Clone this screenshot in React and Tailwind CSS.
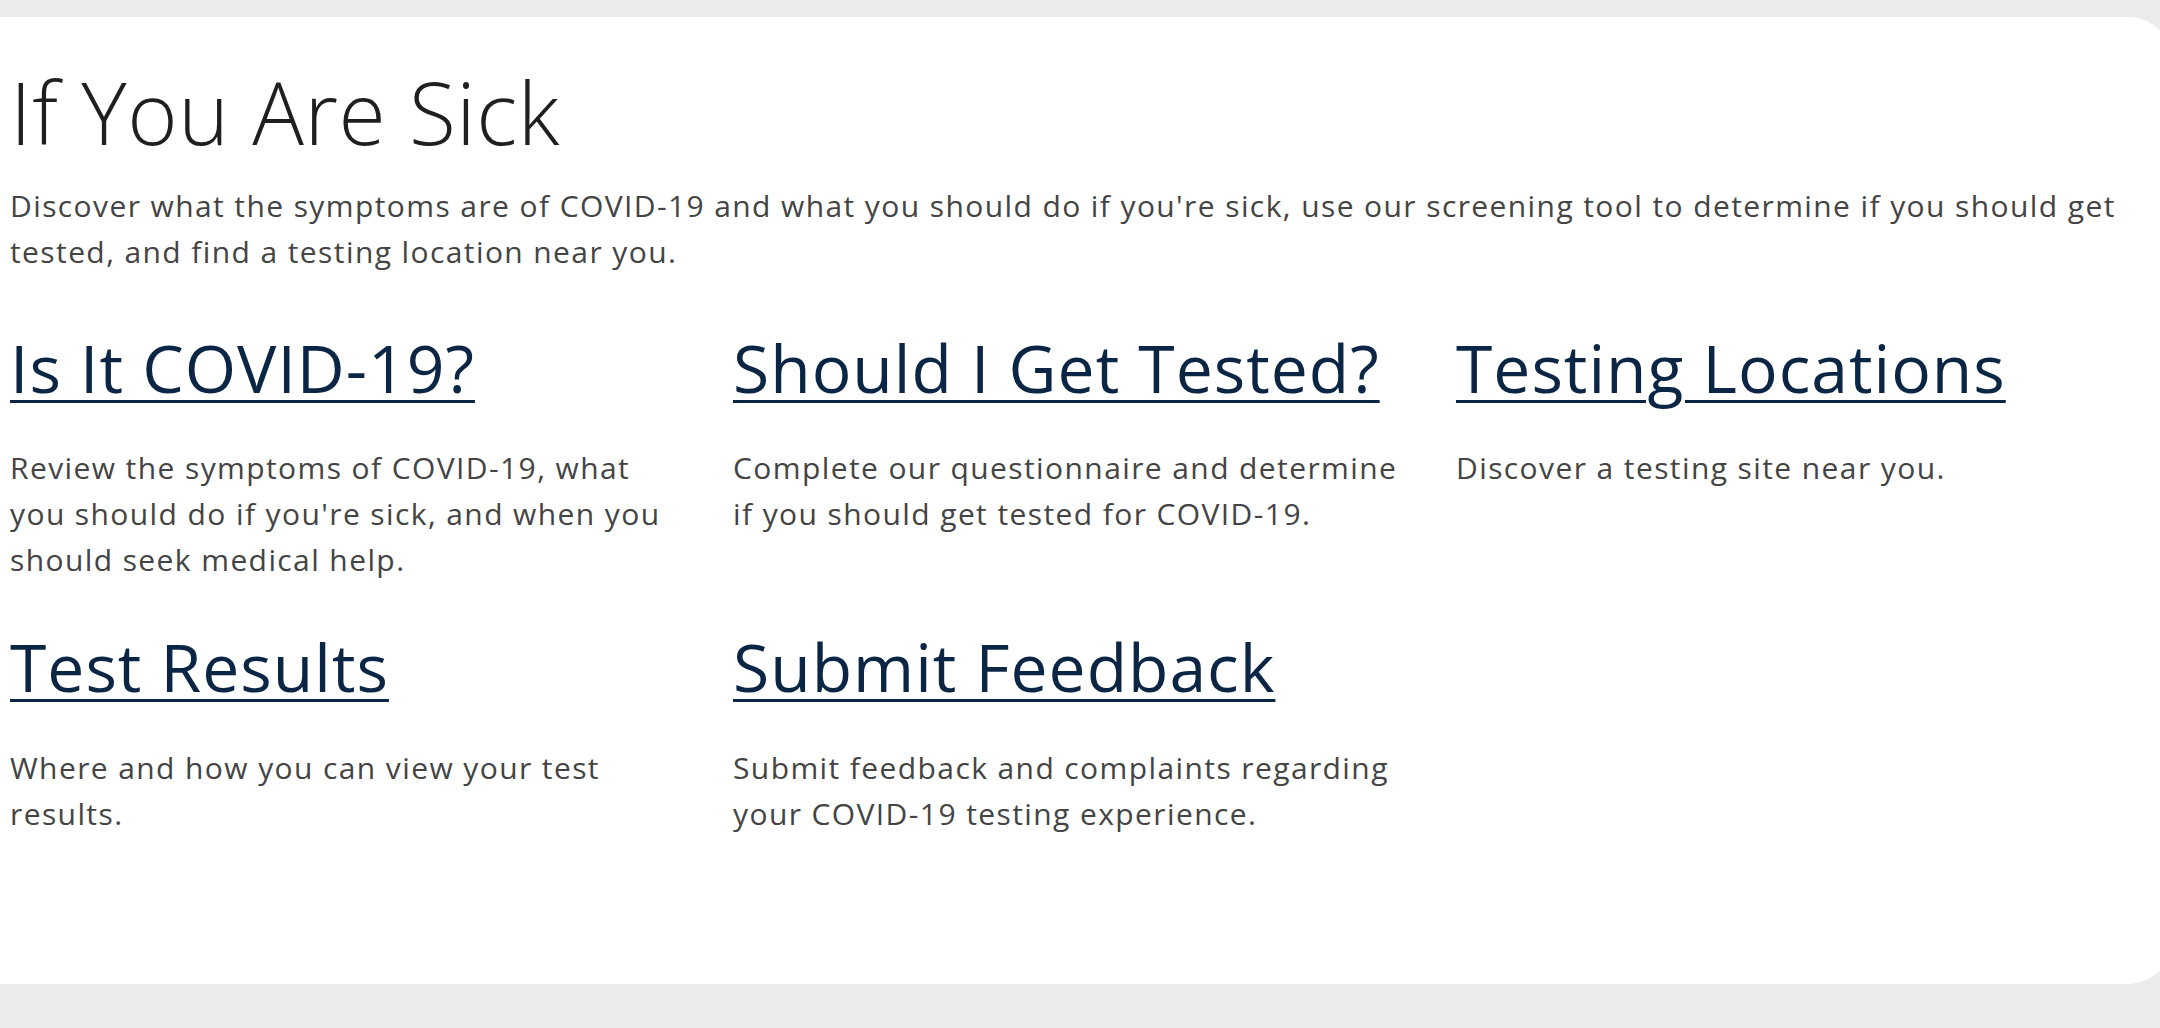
import React from 'react';

const links = [
	{
		title: 'Is It COVID-19?',
		text: "Review the symptoms of COVID-19, what you should do if you're sick, and when you should seek medical help.",
	},
	{
		title: 'Should I Get Tested?',
		text: 'Complete our questionnaire and determine if you should get tested for COVID-19.',
	},
	{
		title: 'Testing Locations',
		text: 'Discover a testing site near you.',
	},
	{
		title: 'Test Results',
		text: 'Where and how you can view your test results.',
	},
	{
		title: 'Submit Feedback',
		text: 'Submit feedback and complaints regarding your COVID-19 testing experience.',
	},
];

function App() {
	return (
		<div className="w-full min-h-[1028px] overflow-hidden bg-[#ececec] pt-[17px] font-['Open_Sans',sans-serif]">
			<div className="w-[2172px] h-[967px] bg-white rounded-r-[44px] pt-[43px] pl-[10px]">
				<h1 className="text-[86px] leading-[1.2] font-light tracking-[0.5px] text-[#1f1f1f]">If You Are Sick</h1>
				<p className="mt-[20px] text-[30px] leading-[46px] tracking-[1.4px] text-[#444444] pr-[40px]">
					Discover what the symptoms are of COVID-19 and what you should do if you're sick, use our screening tool to determine if you should get tested, and find a testing location near you.
				</p>

				{/* Link cards */}
				<div className="grid grid-cols-[repeat(3,723px)] gap-y-[44px] mt-[53px]">
					{links.map((link) => (
						<div key={link.title} className="pr-[47px]">
							<a href="#" className="block w-fit text-[66px] leading-[1.2] font-[380] tracking-[1px] text-[#0b2545] underline decoration-[3px] underline-offset-[7px]">
								{link.title}
							</a>
							<p className="mt-[38px] text-[30px] leading-[46px] tracking-[1.4px] text-[#444444]">{link.text}</p>
						</div>
					))}
				</div>
			</div>
		</div>
	);
}

export default App;
